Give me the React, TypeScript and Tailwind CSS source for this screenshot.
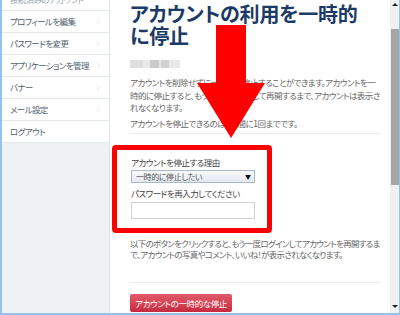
import { ChevronRight } from 'lucide-react'

const menu = ['プロフィールを編集', 'パスワードを変更', 'アプリケーションを管理', 'バナー', 'メール設定']

const font = "font-['Noto_Sans_CJK_JP','Liberation_Sans',sans-serif] [font-feature-settings:'palt']"

function Sidebar() {
  return (
    <aside className="w-[108px] shrink-0 bg-[#eef2f5] border-r border-[#dfe4e9]">
      <div className="-mt-[11px]">
        <div className="h-[22px] bg-white border-b border-[#e4e8ec] flex items-center px-[8px] text-[8.5px] text-[#9aa5b0] whitespace-nowrap tracking-[-0.6px]">
          接続済みのアカウント
        </div>
        {menu.map((item) => (
          <div
            key={item}
            className="h-[22px] bg-white border-b border-[#e4e8ec] flex items-center justify-between pl-[8px] pr-[6px]"
          >
            <span className="text-[8.5px] text-[#51606e] whitespace-nowrap tracking-[-0.6px]">{item}</span>
            <ChevronRight size={9} strokeWidth={1.5} className="shrink-0 text-[#c9cfd5]" />
          </div>
        ))}
        <div className="h-[22px] bg-white border-b border-[#e4e8ec] flex items-center pl-[8px]">
          <span className="text-[8.5px] text-[#51606e] whitespace-nowrap tracking-[-0.6px]">ログアウト</span>
        </div>
      </div>
    </aside>
  )
}

function Scrollbar() {
  return (
    <div className="w-[9px] shrink-0 bg-[#f0f0f0] flex flex-col items-center">
      <div className="h-[29px] w-full flex justify-center pt-[3px]">
        <div className="w-0 h-0 border-l-[3px] border-r-[3px] border-b-[3px] border-l-transparent border-r-transparent border-b-[#222]" />
      </div>
      <div className="h-[156px] w-[8px] bg-[#a6a6a6]" />
      <div className="flex-1" />
      <div className="h-[8px] w-full flex justify-center">
        <div className="w-0 h-0 border-l-[3px] border-r-[3px] border-t-[3px] border-l-transparent border-r-transparent border-t-[#222]" />
      </div>
    </div>
  )
}

const body = 'text-[8.5px] text-[#666] whitespace-nowrap'

export default function App() {
  return (
    <div className={`relative w-[400px] h-[315px] overflow-hidden flex bg-white border-l-2 border-r border-b-2 border-[#93c3ec] ${font}`}>
      <Sidebar />
      <main className="flex-1 min-w-0 pl-[20px] pr-[10px]">
        <h1 className="pt-[3px] text-[20px] leading-[22px] font-bold text-[#1b3a66] tracking-[-0.2px] whitespace-nowrap">
          アカウントの利用を一時的
          <br />
          に停止
        </h1>
        <div className="mt-[13px] flex h-[8px]">
          <div className="w-[13px] bg-[#dedede]" />
          <div className="w-[7px] bg-[#e8e8e8]" />
          <div className="w-[9px] bg-[#cacaca]" />
          <div className="w-[2px] bg-[#e6e6e6]" />
          <div className="w-[8px] bg-[#d3d3d3]" />
          <div className="w-[11px] bg-[#e9e9e9]" />
        </div>
        <p className={`mt-[8px] leading-[12.5px] tracking-[-0.55px] ${body}`}>
          アカウントを削除せずに一時的に停止することができます。アカウントを一
          <br />
          時的に停止すると、もう一度ログインして再開するまで、アカウントは表示さ
          <br />
          れなくなります。
        </p>
        <p className={`mt-[3px] leading-[12.5px] tracking-[-0.5px] ${body}`}>
          アカウントを停止できるのは1週間に1回までです。
        </p>
        <div className="mt-[4px] h-px bg-[#ececec]" />
        <form className="mt-[11px] -ml-[18px] w-[160px] h-[88px] border-[5px] border-[#ff0000] rounded-[4px] pl-[14px] pt-[6px]">
          <label className="block text-[8.5px] leading-[13px] text-[#444] whitespace-nowrap tracking-[-0.5px]">アカウントを停止する理由</label>
          <div className="mt-[1px] w-[124px] h-[13px] border border-[#a9b8c8] bg-gradient-to-b from-[#f7f9fb] to-[#e3e9f0] flex items-center justify-between pl-[4px] pr-[3px]">
            <span className="text-[8px] leading-none text-[#555] whitespace-nowrap tracking-[-0.4px]">一時的に停止したい</span>
            <span className="text-[6px] leading-none text-[#111]">▼</span>
          </div>
          <label className="mt-[4px] block text-[8.5px] leading-[13px] text-[#444] whitespace-nowrap tracking-[-0.5px]">パスワードを再入力してください</label>
          <div className="mt-[2px] w-[124px] h-[17px] border border-[#d2d2d2] bg-white" />
        </form>
        <p className={`mt-[5px] leading-[11px] tracking-[-0.7px] ${body}`}>
          以下のボタンをクリックすると、もう一度ログインしてアカウントを再開するま
          <br />
          で、アカウントの写真やコメント、いいね！が表示されなくなります。
        </p>
        <div className="mt-[22px] h-px bg-[#ececec]" />
        <button className="mt-[11px] w-[102px] h-[18px] rounded-[2px] bg-gradient-to-b from-[#e15a6b] to-[#c7293f] text-white text-[8.5px] leading-none whitespace-nowrap tracking-[-0.4px]">
          アカウントの一時的な停止
        </button>
      </main>
      <Scrollbar />
      <svg className="absolute left-0 top-0 pointer-events-none" width="400" height="315">
        <polygon points="214,25 244,25 244,83 263,83 229,138 195,83 214,83" fill="#ff0000" />
      </svg>
    </div>
  )
}
